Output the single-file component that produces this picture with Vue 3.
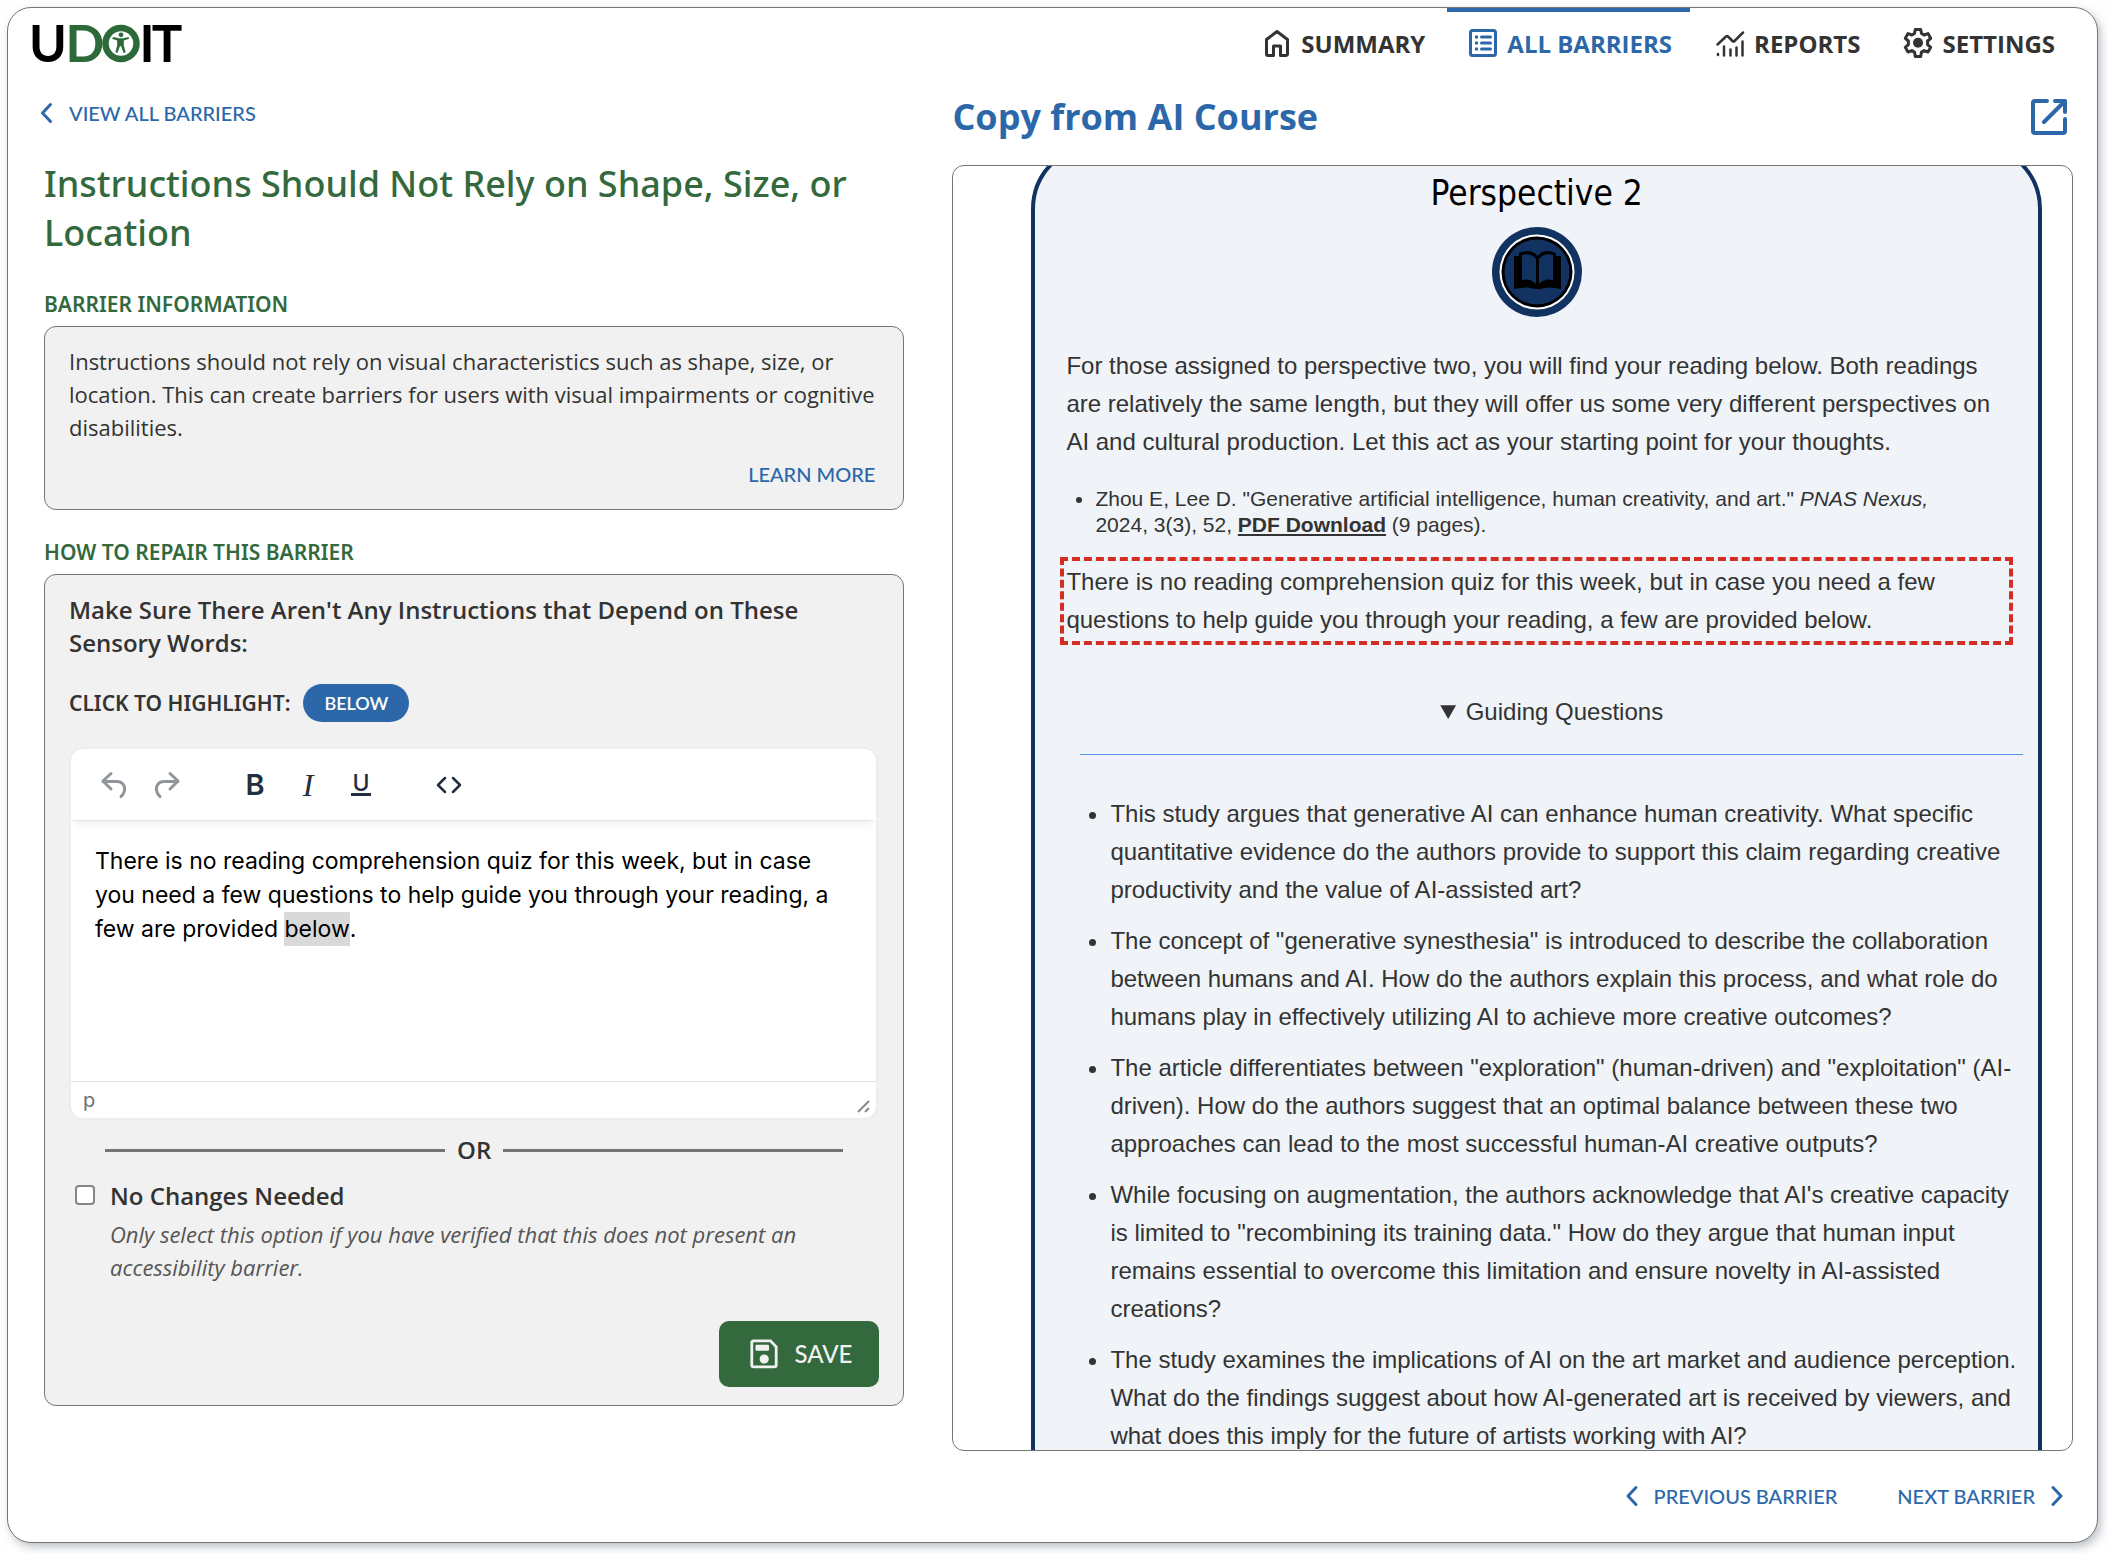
<script setup>
import { ref } from 'vue'

const tabs = [
  { id: 'summary', label: 'SUMMARY' },
  { id: 'barriers', label: 'ALL BARRIERS' },
  { id: 'reports', label: 'REPORTS' },
  { id: 'settings', label: 'SETTINGS' }
]
const activeTab = ref('barriers')
const noChanges = ref(false)

const questions = [
  'This study argues that generative AI can enhance human creativity. What specific quantitative evidence do the authors provide to support this claim regarding creative productivity and the value of AI-assisted art?',
  'The concept of "generative synesthesia" is introduced to describe the collaboration between humans and AI. How do the authors explain this process, and what role do humans play in effectively utilizing AI to achieve more creative outcomes?',
  'The article differentiates between "exploration" (human-driven) and "exploitation" (AI-driven). How do the authors suggest that an optimal balance between these two approaches can lead to the most successful human-AI creative outputs?',
  'While focusing on augmentation, the authors acknowledge that AI\'s creative capacity is limited to "recombining its training data." How do they argue that human input remains essential to overcome this limitation and ensure novelty in AI-assisted creations?',
  'The study examines the implications of AI on the art market and audience perception. What do the findings suggest about how AI-generated art is received by viewers, and what does this imply for the future of artists working with AI?'
]
</script>

<template>
  <div class="app-card">
    <header class="topbar">
      <svg class="logo" width="152" height="72" viewBox="0 -16 152 72" role="img" aria-label="UDOIT">
        <g class="logo-text">
          <text x="16" y="38" fill="#000">U</text>
          <text x="53" y="38" fill="#2c6a3a">D</text>
          <text x="115" y="38" fill="#000">I</text>
          <text x="135" y="38" fill="#000">T</text>
        </g>
        <circle cx="89" cy="19.500" r="15.500" fill="none" stroke="#2c6a3a" stroke-width="6.500" />
        <g fill="#2c6a3a">
          <circle cx="89" cy="10.800" r="2.400" />
          <path d="M81.500 13l5.500 1.300h4l5.500-1.300.6 1.800-5.300 1.800v4.600l1.800 7-2 .7-2.600-7h-1l-2.600 7-2-.7 1.800-7v-4.600l-5.300-1.800z" />
        </g>
      </svg>
      <nav class="tabs" aria-label="Main">
        <a
          v-for="tab in tabs"
          :key="tab.id"
          href="#"
          class="tab"
          :class="{ active: tab.id === activeTab }"
          @click.prevent="activeTab = tab.id"
        >
          <svg v-if="tab.id === 'summary'" class="tab-icon" viewBox="0 0 32 32">
            <path d="M16 4.500L5.500 12.500V27a1.500 1.500 0 0 0 1.500 1.500h5.500V19h7v9.500H25a1.500 1.500 0 0 0 1.500-1.500V12.500z" />
          </svg>
          <svg v-else-if="tab.id === 'barriers'" class="tab-icon" viewBox="0 0 32 32">
            <rect x="3.500" y="3.500" width="25" height="25" rx="2" />
            <path d="M14.500 10h9M14.500 16h9M14.500 22h9" />
            <path d="M9.500 10h.01M9.500 16h.01M9.500 22h.01" stroke-width="3.500" />
          </svg>
          <svg v-else-if="tab.id === 'reports'" class="tab-icon" viewBox="0 0 32 32">
            <path d="M3.500 17.500L12 9.500q1-1 2 0l4.500 4.500q1 1 2 0L29 5.500" stroke-width="2.500" />
            <path d="M4 28v-1M10 28.500v-9M16.500 28.500v-6M22.500 28.500v-8M28.500 28.500v-14" stroke-width="2.500" />
          </svg>
          <svg v-else class="tab-icon" viewBox="0 0 32 32">
            <path d="M13.300 2.500h5.400l.8 4 2.600 1.500 3.900-1.400 2.700 4.700-3.100 2.700v3.600l3.100 2.700-2.700 4.700-3.900-1.400-2.600 1.500-.8 4.400h-5.400l-.8-4.400-2.600-1.500L6 25l-2.700-4.700 3.100-2.700V14l-3.100-2.700L6 6.600 9.900 8l2.600-1.500z" />
            <circle cx="16" cy="15.800" r="5" fill="currentColor" stroke="none" />
          </svg>
          <span>{{ tab.label }}</span>
        </a>
      </nav>
    </header>

    <main class="columns">
      <section class="left">
        <button type="button" class="link-btn back">
          <svg class="chevron" viewBox="0 0 24 24"><path d="M15.500 3.500L7.500 12l8 8.500" /></svg>
          <span>VIEW ALL BARRIERS</span>
        </button>
        <h1>Instructions Should Not Rely on Shape, Size, or Location</h1>

        <h2>BARRIER INFORMATION</h2>
        <div class="panel info">
          <p>Instructions should not rely on visual characteristics such as shape, size, or location. This can create barriers for users with visual impairments or cognitive disabilities.</p>
          <button type="button" class="link-btn learn">LEARN MORE</button>
        </div>

        <h2 class="repair-title">HOW TO REPAIR THIS BARRIER</h2>
        <div class="panel">
          <h3>Make Sure There Aren't Any Instructions that Depend on These Sensory Words:</h3>
          <div class="highlight-row">
            <span class="highlight-label">CLICK TO HIGHLIGHT:</span>
            <button type="button" class="pill">BELOW</button>
          </div>

          <div class="editor">
            <div class="toolbar" role="toolbar" aria-label="Formatting">
              <div class="tool-group">
                <button type="button" class="tool muted" aria-label="Undo">
                  <svg viewBox="0 0 32 32"><path d="M13 4.500L5 12l8 8M5 12.500h14c5 0 8.500 4 7.500 9-.5 2.500-1.500 4.500-3.500 6" /></svg>
                </button>
                <button type="button" class="tool muted" aria-label="Redo">
                  <svg viewBox="0 0 32 32"><path d="M19 4.500l8 7.500-8 8M27 12.500H13c-5 0-8.500 4-7.500 9 .5 2.500 1.500 4.500 3.500 6" /></svg>
                </button>
              </div>
              <div class="tool-group">
                <button type="button" class="tool" aria-label="Bold"><span class="bold">B</span></button>
                <button type="button" class="tool" aria-label="Italic"><span class="italic">I</span></button>
                <button type="button" class="tool" aria-label="Underline"><span class="underline">U</span></button>
              </div>
              <div class="tool-group">
                <button type="button" class="tool" aria-label="Source code">
                  <svg viewBox="0 0 32 32"><path d="M12 9l-7 7 7 7M20 9l7 7-7 7" stroke-width="2.500" /></svg>
                </button>
              </div>
            </div>
            <div class="editor-body" contenteditable="true" role="textbox" aria-label="Barrier text" spellcheck="false">
              <p>There is no reading comprehension quiz for this week, but in case you need a few questions to help guide you through your reading, a few are provided <mark>below</mark>.</p>
            </div>
            <div class="statusbar">
              <span>p</span>
              <svg class="resizer" width="16" height="16" viewBox="0 0 16 16"><path d="M2 14L13 3M9 14l4-4" /></svg>
            </div>
          </div>

          <div class="or"><span>OR</span></div>

          <div class="option">
            <input id="no-changes" v-model="noChanges" type="checkbox" aria-describedby="no-changes-hint" />
            <div>
              <label for="no-changes">No Changes Needed</label>
              <p id="no-changes-hint">Only select this option if you have verified that this does not present an accessibility barrier.</p>
            </div>
          </div>

          <button type="button" class="save">
            <svg width="32" height="32" viewBox="0 0 32 32">
              <path d="M4.500 2.800h18l5.700 6V27a1.800 1.800 0 0 1-1.800 1.800H5.600A1.800 1.800 0 0 1 3.800 27V4.500a1.800 1.800 0 0 1 1.800-1.700z" fill="none" stroke="currentColor" stroke-width="2.800" />
              <rect x="7.500" y="6.800" width="13.500" height="6" rx="1" fill="currentColor" />
              <circle cx="16.200" cy="21" r="4.600" fill="currentColor" />
            </svg>
            <span>SAVE</span>
          </button>
        </div>
      </section>

      <section class="right">
        <div class="preview-head">
          <h2 class="course">Copy from AI Course</h2>
          <a href="#" class="open" aria-label="Open in new window">
            <svg width="40" height="40" viewBox="0 0 40 40">
              <path d="M18 4H6a2 2 0 0 0-2 2v28a2 2 0 0 0 2 2h28a2 2 0 0 0 2-2V22M26 4h10v11M36 4L15 25" />
            </svg>
          </a>
        </div>

        <div class="frame">
          <article class="content-card">
            <h3 class="perspective">Perspective 2</h3>
            <svg class="badge" width="90" height="90" viewBox="0 0 90 90">
              <circle cx="45" cy="45" r="45" fill="#123262" />
              <circle cx="45" cy="45" r="37.500" fill="#fff" />
              <circle cx="45" cy="45" r="35.500" fill="#000" />
              <circle cx="45" cy="45" r="32.500" fill="#123262" />
              <path d="M22 29h5v-3q12-5 18.500 3 6.500-8 18.500-3v3h5v33q-14-3-20.500 0h-6q-6.500-3-20.500 0z" fill="#000" />
              <path d="M30 28q9-2.500 14 4v25q-5-6-14-4zM61 28q-9-2.500-14 4v25q5-6 14-4z" fill="#123262" />
            </svg>
            <p class="intro">For those assigned to perspective two, you will find your reading below. Both readings are relatively the same length, but they will offer us some very different perspectives on AI and cultural production. Let this act as your starting point for your thoughts.</p>
            <ul class="sources">
              <li>Zhou E, Lee D. "Generative artificial intelligence, human creativity, and art." <em>PNAS Nexus,</em> 2024, 3(3), 52, <a href="#">PDF Download</a> (9 pages).</li>
            </ul>
            <p class="flagged">There is no reading comprehension quiz for this week, but in case you need a few questions to help guide you through your reading, a few are provided below.</p>
            <details open>
              <summary>Guiding Questions</summary>
              <ul class="questions">
                <li v-for="question in questions" :key="question">{{ question }}</li>
              </ul>
            </details>
          </article>
        </div>

        <footer class="pager">
          <button type="button" class="link-btn">
            <svg class="chevron" viewBox="0 0 24 24"><path d="M16 3.500L8 12l8 8.500" /></svg>
            <span>PREVIOUS BARRIER</span>
          </button>
          <button type="button" class="link-btn">
            <span>NEXT BARRIER</span>
            <svg class="chevron" viewBox="0 0 24 24"><path d="M8 3.500l8 8.500-8 8.500" /></svg>
          </button>
        </footer>
      </section>
    </main>
  </div>
</template>

<style>
body {
  margin: 0;
  background: #fefefe;
}
</style>

<style scoped>
* {
  box-sizing: border-box;
}
h1,
h2,
h3,
p,
ul {
  margin: 0;
}
button {
  border: 0;
  background: none;
  padding: 0;
  cursor: pointer;
}
.app-card {
  display: flex;
  flex-direction: column;
  height: calc(100vh - 18px);
  margin: 7px 10px 11px 7px;
  border: 1px solid #757575;
  border-radius: 24px;
  background: #fff;
  box-shadow: 3px 4px 8px rgba(40, 60, 80, 0.3);
  color: #333;
  font: 22px/33px "Open Sans", "Noto Sans", sans-serif;
}
.topbar {
  display: flex;
  justify-content: space-between;
  height: 72px;
  padding: 0 24px;
}
.logo-text {
  font: 700 51px Lato, sans-serif;
  text-anchor: middle;
}
.tabs {
  display: flex;
  gap: 4px;
  height: 70px;
}
.tab {
  display: flex;
  align-items: center;
  gap: 8px;
  padding: 0 18px 0 20px;
  color: #333;
  font-size: 24px;
  font-weight: 700;
  text-decoration: none;
}
.tab.active {
  color: #2c68a9;
  box-shadow: inset 0 4px #2c68a9;
}
.tab-icon {
  width: 32px;
  height: 32px;
  fill: none;
  stroke: currentColor;
  stroke-width: 3;
  stroke-linecap: round;
  stroke-linejoin: round;
}
.columns {
  flex: 1;
  display: grid;
  grid-template-columns: 43fr 56fr;
  gap: 48px;
  min-height: 0;
  padding: 0 24px 34px 36px;
}
.left {
  display: flex;
  flex-direction: column;
  align-items: stretch;
  padding-top: 21px;
}
.link-btn {
  display: flex;
  align-items: center;
  gap: 10px;
  color: #2c68a9;
  font: 500 20px/24px Lato, sans-serif;
}
.chevron {
  width: 24px;
  height: 24px;
  fill: none;
  stroke: currentColor;
  stroke-width: 3;
  stroke-linecap: round;
  stroke-linejoin: round;
}
.back {
  align-self: flex-start;
  margin-left: -9px;
}
h1 {
  margin-top: 34px;
  color: #33693c;
  font: 500 36px/49px "Noto Sans", sans-serif;
}
h2 {
  margin: 33px 0 8px;
  color: #33693c;
  font: 600 21px/28px "Noto Sans", sans-serif;
}
.repair-title {
  margin-top: 28px;
}
.panel {
  display: flex;
  flex-direction: column;
  padding: 18px 24px;
  border: 1px solid #757575;
  border-radius: 12px;
  background: #f1f1f1;
}
.info {
  padding-bottom: 23px;
}
.learn {
  align-self: flex-end;
  margin: 18px 4px 0 0;
}
h3 {
  font-size: 24px;
  font-weight: 600;
}
.highlight-row {
  display: flex;
  align-items: center;
  gap: 13px;
  margin-top: 25px;
}
.highlight-label {
  font: 600 21px/28px "Noto Sans", sans-serif;
}
.pill {
  height: 38px;
  padding: 0 21px;
  border-radius: 19px;
  background: #2c68a9;
  color: #fff;
  font: 600 18px/24px Lato, sans-serif;
}
.editor {
  margin: 25px 1px 0 0;
  border: 2px solid #ededed;
  border-radius: 14px;
  background: #fff;
  overflow: hidden;
}
.toolbar {
  display: flex;
  gap: 36px;
  height: 71px;
  padding-left: 17px;
  box-shadow: 0 2px 2px -2px rgba(34, 47, 62, 0.2), 0 8px 8px -4px rgba(34, 47, 62, 0.08);
}
.tool-group {
  display: flex;
  gap: 1px;
}
.tool {
  display: flex;
  align-items: center;
  justify-content: center;
  width: 52px;
  color: #222f3e;
}
.tool svg {
  width: 32px;
  height: 32px;
  fill: none;
  stroke: currentColor;
  stroke-width: 3;
  stroke-linecap: round;
  stroke-linejoin: round;
}
.muted {
  color: #90959b;
}
.bold {
  font: 600 29px/32px Inter, sans-serif;
}
.italic {
  font: italic 32px/32px "Liberation Serif", serif;
}
.underline {
  padding: 0 1px;
  border-bottom: 3px solid;
  font: 500 23px/20px Inter, sans-serif;
}
.editor-body {
  min-height: 261px;
  padding: 24px;
  outline: none;
  color: #000;
  font: 23px/34px Inter, sans-serif;
}
mark {
  display: inline-block;
  background: #d9d9d9;
  color: inherit;
}
.statusbar {
  display: flex;
  justify-content: space-between;
  height: 37px;
  padding: 0 4px 0 12px;
  border-top: 1px solid #e3e3e3;
  color: #667079;
  font: 20px/36px Inter, sans-serif;
}
.resizer {
  align-self: flex-end;
  margin-bottom: 4px;
  fill: none;
  stroke: #848a91;
  stroke-width: 2;
}
.or {
  display: flex;
  align-items: center;
  gap: 12px;
  margin: 14px 36px 0;
  font-size: 24px;
  line-height: 32px;
  font-weight: 600;
}
.or::before,
.or::after {
  content: "";
  flex: 1;
  height: 3px;
  background: #757575;
}
.option {
  display: flex;
  align-items: flex-start;
  gap: 15px;
  margin-top: 13px;
  padding-left: 6px;
}
.option input {
  flex: none;
  appearance: none;
  width: 20px;
  height: 20px;
  margin: 6px 0 0;
  border: 2px solid #858585;
  border-radius: 4px;
  background: #fff;
}
.option label {
  display: block;
  font-size: 24px;
  font-weight: 600;
}
.option p {
  margin-top: 6px;
  color: #555;
  font-style: italic;
}
.save {
  display: flex;
  align-items: center;
  align-self: flex-end;
  gap: 14px;
  height: 66px;
  margin-top: 37px;
  padding: 0 27px 0 29px;
  border-radius: 10px;
  background: #33693c;
  color: #f1f1f1;
  font: 500 24px/32px Lato, sans-serif;
}
.right {
  display: flex;
  flex-direction: column;
  min-width: 0;
  min-height: 0;
  padding-top: 12px;
}
.preview-head {
  display: flex;
  align-items: center;
  justify-content: space-between;
  height: 50px;
  padding-right: 4px;
}
.course {
  margin: 0;
  color: #2c68a9;
  font: 700 36px/50px "Open Sans", sans-serif;
}
.open {
  display: flex;
  color: #2c68a9;
}
.open svg {
  fill: none;
  stroke: currentColor;
  stroke-width: 4;
  stroke-linecap: round;
  stroke-linejoin: round;
}
.frame {
  flex: 1 1 0;
  min-height: 0;
  margin-top: 23px;
  border: 1px solid #757575;
  border-radius: 12px;
  background: #fff;
  overflow: hidden;
}
.content-card {
  margin: -23px 30px 0 78px;
  padding: 25px 31px 60px;
  border: 4px solid #123262;
  border-radius: 66px;
  background: #f0f3f8;
  font: 24px/38px "Liberation Sans", Arial, sans-serif;
}
.perspective {
  color: #000;
  text-align: center;
  font: 400 35px/42px "DejaVu Sans Condensed", "DejaVu Sans", sans-serif;
}
.badge {
  display: block;
  margin: 13px auto 30px;
}
.sources {
  margin-top: 25px;
  padding: 0 24px 0 29px;
  font-size: 21px;
  line-height: 26px;
}
.sources a {
  color: inherit;
  font-weight: 700;
}
.flagged {
  margin: 19px -6px 48px;
  padding: 2px;
  border: 4px dashed #d32d24;
}
details {
  margin: 0 -16px 0 14px;
}
summary {
  padding-bottom: 23px;
  border-bottom: 1px solid #5b94e8;
  text-align: center;
}
.questions {
  display: flex;
  flex-direction: column;
  gap: 13px;
  margin-top: 40px;
  padding-left: 30px;
}
.pager {
  display: flex;
  justify-content: flex-end;
  gap: 60px;
  margin-top: 33px;
  padding-right: 4px;
}
</style>
